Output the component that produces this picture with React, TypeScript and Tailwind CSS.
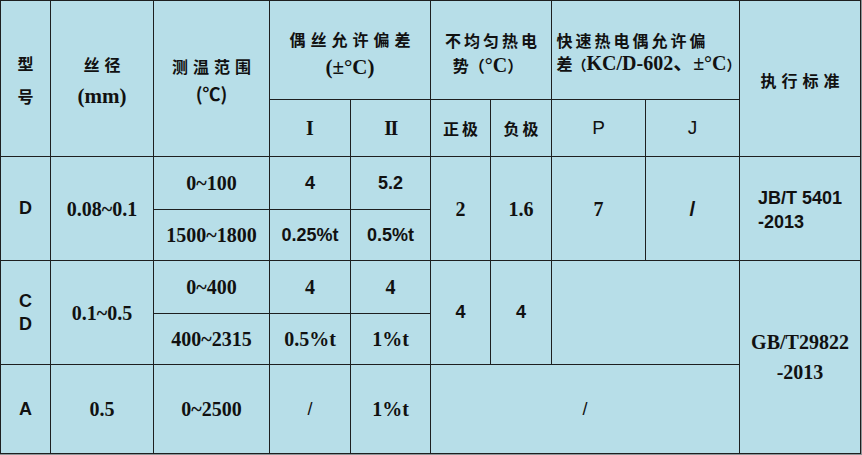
import React from "react";

// Excel-style spec table: light aqua cells, dark 1px rules
const serif = "font-['Liberation_Serif','Noto_Sans_CJK_SC',serif] font-bold text-[20px]";
const sans = "font-['Liberation_Sans','Noto_Sans_CJK_SC',sans-serif] font-bold text-[18px]";
const cjk = "font-['Noto_Sans_CJK_SC',sans-serif] font-bold text-[16px]";

function Cell({ className = "", children }: { className?: string; children?: React.ReactNode }) {
  return (
    <div className={`flex items-center justify-center text-center bg-[#b7dee8] text-[#111] ${className}`}>
      {children}
    </div>
  );
}

export default function App() {
  return (
    <div className="w-[862px] h-[455px] bg-[#8f9598]">
      <div className="grid w-[861px] h-[454px] p-px gap-px bg-[#1d1f20] grid-cols-[49px_102px_115px_80px_79px_59px_60px_93px_93px_120px] grid-rows-[98px_56px_52px_50px_52px_50px_88px]">
        {/* header */}
        <Cell className="col-start-1 row-start-1 row-span-2">
          <div className={`${cjk} leading-[33px] pt-[2px]`}>型<br />号</div>
        </Cell>
        <Cell className="col-start-2 row-start-1 row-span-2">
          <div className="pt-[3px]">
            <div className={`${cjk} leading-[32px] tracking-[5px] pl-[5px]`}>丝径</div>
            <div className={`${serif} text-[21px] leading-[32px]`}>(mm)</div>
          </div>
        </Cell>
        <Cell className="col-start-3 row-start-1 row-span-2">
          <div className="pt-[2px]">
            <div className={`${cjk} leading-[27px] tracking-[5px] pl-[5px]`}>测温范围</div>
            <div className={`${cjk} text-[18px] leading-[27px]`}>(℃)</div>
          </div>
        </Cell>
        <Cell className="col-start-4 row-start-1 col-span-2">
          <div className="pt-[6px]">
            <div className={`${cjk} leading-[28px] tracking-[5px] pl-[5px]`}>偶丝允许偏差</div>
            <div className={`${serif} text-[21px] leading-[28px]`}>(±°C)</div>
          </div>
        </Cell>
        <Cell className="col-start-6 row-start-1 col-span-2">
          <div className="pt-[6px]">
            <div className={`${cjk} leading-[25px] tracking-[3px] pl-[3px]`}>不均匀热电</div>
            <div className={`${cjk} leading-[25px] pr-[6px]`}>
              势（<span className={`${serif} text-[18px]`}>°C</span>）
            </div>
          </div>
        </Cell>
        <Cell className="col-start-8 row-start-1 col-span-2">
          <div className="pt-[4px] pl-[6px] text-left whitespace-nowrap">
            <div className={`${cjk} leading-[23px] tracking-[3px]`}>快速热电偶允许偏</div>
            <div className={`${cjk} leading-[23px]`}>
              差<span className="text-[14px]">（</span>
              <span className={`${serif} text-[14px]`}>KC/D-602、±°C</span>
              <span className="text-[14px]">）</span>
            </div>
          </div>
        </Cell>
        <Cell className="col-start-10 row-start-1 row-span-2">
          <div className={`${cjk} tracking-[5px] pl-[5px] pt-[3px]`}>执行标准</div>
        </Cell>

        <Cell className={`col-start-4 row-start-2 ${serif}`}>I</Cell>
        <Cell className={`col-start-5 row-start-2 ${serif} tracking-[-1.5px]`}>II</Cell>
        <Cell className={`col-start-6 row-start-2 ${cjk} tracking-[3px] pl-[3px]`}>正极</Cell>
        <Cell className={`col-start-7 row-start-2 ${cjk} tracking-[3px] pl-[3px]`}>负极</Cell>
        <Cell className="col-start-8 row-start-2 font-['Liberation_Sans',sans-serif] text-[19px]">P</Cell>
        <Cell className="col-start-9 row-start-2 font-['Liberation_Sans',sans-serif] text-[19px]">J</Cell>

        {/* D */}
        <Cell className={`col-start-1 row-start-3 row-span-2 ${sans}`}>D</Cell>
        <Cell className={`col-start-2 row-start-3 row-span-2 ${serif}`}>0.08~0.1</Cell>
        <Cell className={`col-start-3 row-start-3 ${serif}`}>0~100</Cell>
        <Cell className={`col-start-4 row-start-3 ${sans}`}>4</Cell>
        <Cell className={`col-start-5 row-start-3 ${sans}`}>5.2</Cell>
        <Cell className={`col-start-3 row-start-4 ${serif}`}>1500~1800</Cell>
        <Cell className={`col-start-4 row-start-4 ${sans}`}>0.25%t</Cell>
        <Cell className={`col-start-5 row-start-4 ${sans}`}>0.5%t</Cell>
        <Cell className={`col-start-6 row-start-3 row-span-2 ${serif}`}>2</Cell>
        <Cell className={`col-start-7 row-start-3 row-span-2 ${serif}`}>1.6</Cell>
        <Cell className={`col-start-8 row-start-3 row-span-2 ${serif}`}>7</Cell>
        <Cell className={`col-start-9 row-start-3 row-span-2 ${sans} text-[21px]`}>/</Cell>
        <Cell className="col-start-10 row-start-3 row-span-2">
          <div className={`${sans} leading-[24px] text-left pt-[2px]`}>
            JB/T 5401<br />-2013
          </div>
        </Cell>

        {/* CD */}
        <Cell className={`col-start-1 row-start-5 row-span-2 ${sans} leading-[23px]`}>
          <div>C<br />D</div>
        </Cell>
        <Cell className={`col-start-2 row-start-5 row-span-2 ${serif}`}>0.1~0.5</Cell>
        <Cell className={`col-start-3 row-start-5 ${serif}`}>0~400</Cell>
        <Cell className={`col-start-4 row-start-5 ${serif}`}>4</Cell>
        <Cell className={`col-start-5 row-start-5 ${serif}`}>4</Cell>
        <Cell className={`col-start-3 row-start-6 ${serif}`}>400~2315</Cell>
        <Cell className={`col-start-4 row-start-6 ${serif}`}>0.5%t</Cell>
        <Cell className={`col-start-5 row-start-6 ${serif}`}>1%t</Cell>
        <Cell className={`col-start-6 row-start-5 row-span-2 ${sans}`}>4</Cell>
        <Cell className={`col-start-7 row-start-5 row-span-2 ${sans}`}>4</Cell>
        <Cell className="col-start-8 row-start-5 row-span-2 col-span-2" />
        <Cell className="col-start-10 row-start-5 row-span-3">
          <div className={`${serif} leading-[30px]`}>
            GB/T29822<br />-2013
          </div>
        </Cell>

        {/* A */}
        <Cell className={`col-start-1 row-start-7 ${sans}`}>A</Cell>
        <Cell className={`col-start-2 row-start-7 ${serif}`}>0.5</Cell>
        <Cell className={`col-start-3 row-start-7 ${serif}`}>0~2500</Cell>
        <Cell className={`col-start-4 row-start-7 ${sans} font-normal`}>/</Cell>
        <Cell className={`col-start-5 row-start-7 ${serif}`}>1%t</Cell>
        <Cell className={`col-start-6 row-start-7 col-span-4 ${sans} font-normal`}>/</Cell>
      </div>
    </div>
  );
}
